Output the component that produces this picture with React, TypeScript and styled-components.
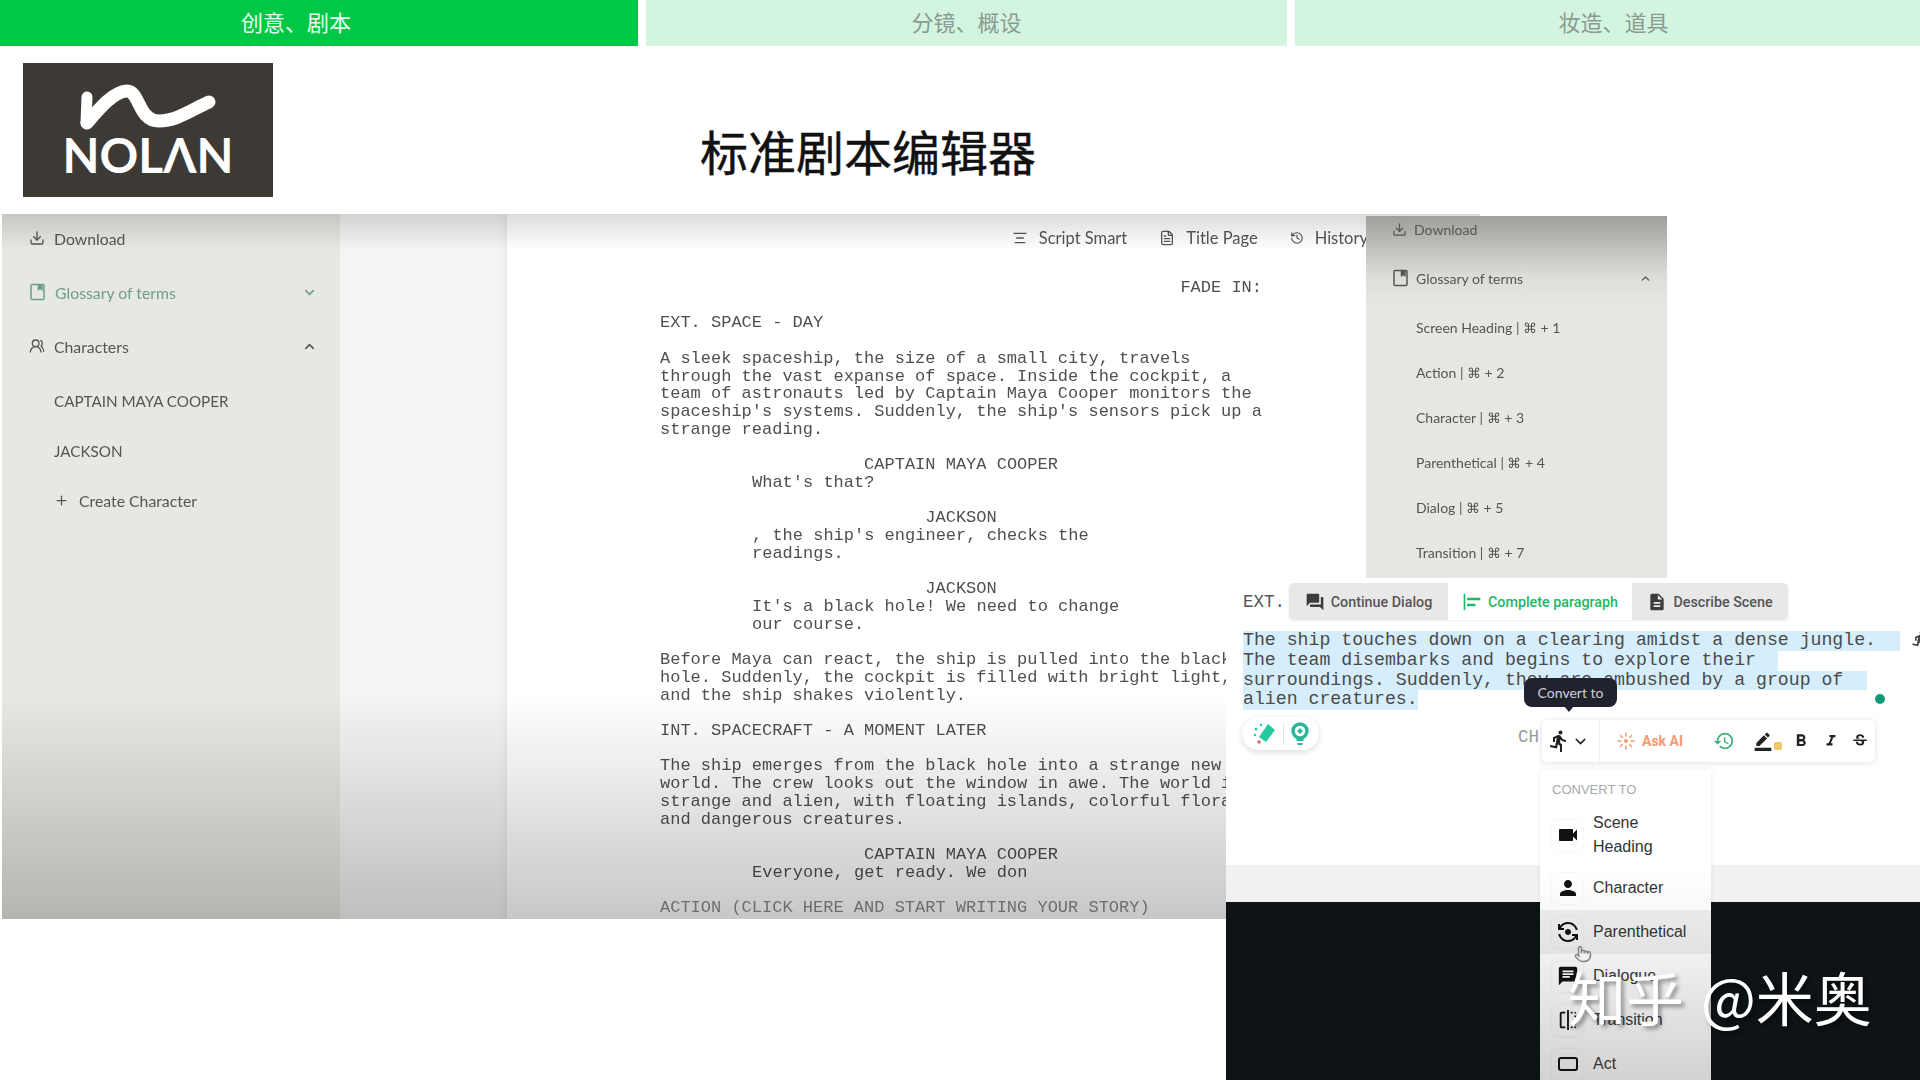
import styled, { createGlobalStyle } from "styled-components";
import { ChevronDown, ChevronUp, Download, History, Plus, UsersRound, AlignCenter, FileText, Pointer } from "lucide-react";
import {
  MdAlignHorizontalLeft,
  MdChat,
  MdDescription,
  MdDirectionsRun,
  MdFlip,
  MdFlipCameraAndroid,
  MdFormatBold,
  MdFormatItalic,
  MdHistory,
  MdPerson,
  MdQuestionAnswer,
  MdBorderColor,
  MdStrikethroughS,
  MdVideocam,
} from "react-icons/md";

const GlobalStyle = createGlobalStyle`
  html, body { margin: 0; padding: 0; background: #fff; }
  * { box-sizing: border-box; }
`;

const Page = styled.div`
  width: 1920px;
  height: 1080px;
  overflow: hidden;
  background: #fff;
  font-family: "Noto Sans CJK SC", "Noto Sans", sans-serif;
`;

// top step bar
const TabBar = styled.div`
  display: grid;
  grid-template-columns: 638px 641px 1fr;
  column-gap: 8px;
  height: 46px;
`;
const StepTab = styled.div<{ $active?: boolean; $shift?: number }>`
  display: flex;
  align-items: center;
  justify-content: center;
  padding-bottom: 5px;
  padding-left: ${(p) => (p.$shift && p.$shift > 0 ? p.$shift : 0)}px;
  padding-right: ${(p) => (p.$shift && p.$shift < 0 ? -p.$shift : 0)}px;
  font-size: 22px;
  background: ${(p) => (p.$active ? "#00c846" : "#d3f5e0")};
  color: ${(p) => (p.$active ? "#e6fff0" : "#8b9a92")};
`;

const Header = styled.div`
  display: flex;
  align-items: flex-start;
  height: 168px;
  padding: 17px 0 0 23px;
`;
const Logo = styled.div`
  position: relative;
  width: 250px;
  height: 134px;
  background: #3d3a36;
  display: flex;
  flex-direction: column;
  align-items: center;
  justify-content: flex-end;
  padding-bottom: 18px;
  svg { position: absolute; left: 0; top: 0; }
`;
const LogoWord = styled.span`
  font-family: Lato, sans-serif;
  font-weight: 700;
  font-size: 48px;
  line-height: 48px;
  color: #fff;
`;
const Title = styled.h1`
  margin: 57px 0 0 427px;
  font-size: 48px;
  line-height: 60px;
  font-weight: 400;
  color: #111;
  -webkit-text-stroke: 0.4px #111;
`;

const Stage = styled.div`
  position: relative;
  height: 866px;
`;

// the big editor screenshot
const Shot = styled.div`
  position: relative;
  display: flex;
  width: 1478px;
  height: 705px;
  margin-left: 2px;
  overflow: hidden;
  &::after {
    content: "";
    position: absolute;
    inset: 0;
    pointer-events: none;
    background:
      linear-gradient(to bottom, rgba(0, 0, 0, 0.14), rgba(0, 0, 0, 0) 36px),
      linear-gradient(to bottom, rgba(0, 0, 0, 0) 68%, rgba(0, 0, 0, 0.22) 100%);
  }
`;
const Sidebar = styled.div`
  width: 338px;
  flex: none;
  background: #e7e7e3;
  padding: 9px 23px 0 27px;
  display: flex;
  flex-direction: column;
  gap: 24px;
  font-family: Lato, sans-serif;
  font-size: 15.8px;
  color: #555;
  filter: blur(0.3px);
`;
const Gutter = styled.div`
  width: 167px;
  flex: none;
  background: #f4f4f2;
  box-shadow: inset -8px 0 8px -6px rgba(0, 0, 0, 0.06);
`;
const Paper = styled.div`
  flex: 1;
  background: #fff;
  filter: blur(0.25px);
`;
const NavRow = styled.div<{ $accent?: boolean }>`
  display: flex;
  align-items: center;
  height: 30px;
  gap: 9px;
  color: ${(p) => (p.$accent ? "#6f9d8f" : "inherit")};
  svg { flex: none; }
`;
const NavLabel = styled.span`
  flex: 1;
`;
const SubList = styled.div`
  display: flex;
  flex-direction: column;
  gap: 19.5px;
  margin-top: 1px;
  padding-left: 25px;
`;
const SubRow = styled.div<{ $caps?: boolean }>`
  display: flex;
  align-items: center;
  height: 30px;
  gap: 10px;
  font-size: ${(p) => (p.$caps ? "15.2px" : "inherit")};
`;

const PaperBar = styled.div`
  display: flex;
  justify-content: flex-end;
  align-items: center;
  height: 48px;
  padding-right: 112px;
  gap: 32px;
  font-family: Lato, sans-serif;
  font-size: 16.5px;
  color: #555;
`;
const BarItem = styled.div`
  display: flex;
  align-items: center;
  gap: 11px;
`;

const Script = styled.div`
  width: 602px;
  margin: 17px 0 0 153px;
  font-family: "Liberation Mono", monospace;
  font-size: 17px;
  line-height: 17.72px;
  color: #4f4f4f;
`;
const ScriptLine = styled.div<{ $kind?: "fade" | "character" | "dialogue" | "hint" }>`
  white-space: pre;
  text-align: ${(p) => (p.$kind === "fade" ? "right" : p.$kind === "character" ? "center" : "left")};
  margin-left: ${(p) => (p.$kind === "dialogue" ? "92px" : "0")};
  color: ${(p) => (p.$kind === "hint" ? "#8a8a8a" : "inherit")};
`;
const Blank = styled.div`
  height: 17.72px;
`;

// glossary panel stuck over the screenshot
const GlossaryPanel = styled.div`
  position: absolute;
  left: 1366px;
  top: 2px;
  width: 301px;
  height: 362px;
  padding: 0 15px 0 26px;
  display: flex;
  flex-direction: column;
  gap: 21px;
  background: linear-gradient(to bottom, #9f9f9c 0, #dcdcd8 60px, #e6e6e2 90px);
  font-family: Lato, sans-serif;
  font-size: 14px;
  color: #555;
  filter: blur(0.3px);
`;
const GlossaryHead = styled.div`
  display: flex;
  flex-direction: column;
  gap: 21px;
  margin-top: -1px;
  margin-bottom: 1px;
`;
const GlossaryRow = styled.div`
  display: flex;
  align-items: center;
  gap: 7px;
  height: 28px;
`;
const GlossaryList = styled.div`
  display: flex;
  flex-direction: column;
  gap: 17px;
  padding-left: 24px;
`;
const GlossaryItem = styled.div`
  height: 28px;
  line-height: 28px;
`;

// AI editor crop, bottom right
const EditorPanel = styled.div`
  position: absolute;
  left: 1226px;
  top: 364px;
  right: 0;
  bottom: 0;
  display: flex;
  flex-direction: column;
  overflow: hidden;
  background: #fff;
`;
const EditorArea = styled.div`
  height: 287px;
  padding: 5px 0 0 17px;
  flex: none;
`;
const GreyBand = styled.div`
  height: 37px;
  flex: none;
  background: #f1f1f1;
`;
const DarkArea = styled.div`
  flex: 1;
  background: #0e1316;
`;
const PromptRow = styled.div`
  display: flex;
  align-items: center;
  height: 37px;
`;
const Mono = styled.span`
  font-family: "Liberation Mono", monospace;
  font-size: 17.5px;
  color: #555;
`;
const PromptTabs = styled.div`
  display: flex;
  height: 37px;
  margin-left: 4px;
  background: #e8e8e8;
  border-radius: 5px;
  box-shadow: 0 1px 3px rgba(0, 0, 0, 0.08);
`;
const PromptTab = styled.div<{ $active?: boolean; $w: number }>`
  display: flex;
  align-items: center;
  justify-content: center;
  gap: 6px;
  width: ${(p) => p.$w}px;
  background: ${(p) => (p.$active ? "#fff" : "transparent")};
  color: ${(p) => (p.$active ? "#1fb864" : "#555")};
  font-family: Roboto, sans-serif;
  font-weight: 500;
  font-size: 14.3px;
  svg { color: ${(p) => (p.$active ? "#1fb864" : "#3c3c3c")}; }
`;
const Selection = styled.div`
  margin-top: 11px;
  font-family: "Liberation Mono", monospace;
  font-size: 18.2px;
  line-height: 19.75px;
  color: #4a4a4a;
`;
const SelectedLine = styled.div<{ $w: number }>`
  width: ${(p) => p.$w}px;
  background: #d6eefc;
  white-space: pre;
`;
const ToolPill = styled.div`
  display: flex;
  align-items: center;
  justify-content: center;
  gap: 5px;
  width: 77px;
  height: 33px;
  margin: 7px 0 0 -1px;
  border-radius: 17px;
  background: #fff;
  box-shadow: 0 2px 6px rgba(0, 0, 0, 0.14);
`;
const PillRule = styled.span`
  width: 1px;
  height: 22px;
  background: #e4e4e4;
`;
const ClippedCh = styled.span`
  position: absolute;
  left: 292px;
  top: 149px;
  font-family: "Liberation Mono", monospace;
  font-size: 17.5px;
  color: #9a9a9a;
`;
const GreenDot = styled.span`
  position: absolute;
  left: 649px;
  top: 116px;
  width: 10px;
  height: 10px;
  border-radius: 50%;
  background: #0f9a78;
`;
const EdgeRunner = styled.span`
  position: absolute;
  left: 684px;
  top: 52px;
  color: #444;
`;
const Tooltip = styled.div`
  position: absolute;
  left: 298px;
  top: 100px;
  width: 93px;
  height: 29px;
  display: flex;
  align-items: center;
  justify-content: center;
  border-radius: 8px;
  background: #20222e;
  color: #cfd0d4;
  font-family: Lato, sans-serif;
  font-size: 14px;
  &::after {
    content: "";
    position: absolute;
    left: 40px;
    bottom: -5px;
    border-left: 5px solid transparent;
    border-right: 5px solid transparent;
    border-top: 6px solid #20222e;
  }
`;
const FloatBar = styled.div`
  position: absolute;
  left: 316px;
  top: 142px;
  width: 333px;
  height: 42px;
  display: flex;
  align-items: center;
  background: #fff;
  border-radius: 5px;
  box-shadow: 0 1px 6px rgba(0, 0, 0, 0.13);
  color: #222;
`;
const BarLeft = styled.div`
  display: flex;
  align-items: center;
  width: 58px;
  height: 100%;
  padding-left: 5px;
  gap: 1px;
  border-right: 1px solid #eee;
`;
const BarRight = styled.div`
  display: flex;
  align-items: center;
  padding-left: 17px;
`;
const AskAi = styled.span`
  margin-left: 7px;
  font-family: Roboto, sans-serif;
  font-weight: 700;
  font-size: 14px;
  color: #f29a74;
`;
const BarIcon = styled.span<{ $gap: number; $color?: string }>`
  display: flex;
  margin-left: ${(p) => p.$gap}px;
  color: ${(p) => p.$color || "#222"};
`;
const Swatch = styled.span`
  width: 8px;
  height: 8px;
  margin: 10px 0 0 1px;
  border-radius: 2px;
  background: #f0c766;
`;
const ConvertMenu = styled.div`
  position: absolute;
  left: 314px;
  top: 192px;
  bottom: 0;
  width: 171px;
  padding-top: 12px;
  background: linear-gradient(to bottom, #fff 0, #fff 100px, #f4f4f4 170px, #d2d2d2 100%);
  box-shadow: 0 0 5px rgba(0, 0, 0, 0.08);
  font-family: "Liberation Sans", sans-serif;
  font-size: 16px;
  line-height: 24.5px;
  color: #333;
`;
const MenuHeading = styled.div`
  padding-left: 12px;
  margin-bottom: 6px;
  font-size: 13px;
  line-height: 16px;
  color: #aaa;
`;
const MenuRow = styled.div<{ $tall?: boolean; $hover?: boolean }>`
  display: flex;
  align-items: center;
  gap: 10px;
  height: ${(p) => (p.$tall ? "62px" : "44px")};
  padding-left: 12px;
  background: ${(p) => (p.$hover ? "rgba(0,0,0,0.06)" : "transparent")};
`;
const MenuIcon = styled.span`
  display: flex;
  align-items: center;
  justify-content: center;
  flex: none;
  width: 31px;
  height: 31px;
  border-radius: 5px;
  color: #111;
  box-shadow: 0 0 3px rgba(0, 0, 0, 0.08);
`;
const MenuLabel = styled.span`
  flex: 1;
`;
const HandCursor = styled.span`
  position: absolute;
  left: 348px;
  top: 366px;
  color: #888;
`;
const Watermark = styled.div`
  position: absolute;
  left: 342px;
  top: 376px;
  font-size: 58px;
  line-height: 84px;
  word-spacing: 4px;
  white-space: pre;
  color: #fff;
  text-shadow: 3px 3px 4px rgba(0, 0, 0, 0.4);
`;

const BookIcon = () => (
  <svg width="17" height="18" viewBox="0 0 17 18" fill="none" stroke="currentColor" strokeWidth="1.5">
    <rect x="2" y="1.5" width="13" height="15" rx="1" />
    <path d="M9.5 1.5v5l1.7-1.2 1.7 1.2v-5" fill="currentColor" />
  </svg>
);

const SunBurst = () => (
  <svg width="18" height="18" viewBox="0 0 18 18" stroke="#f29a74" strokeWidth="1.4" strokeLinecap="round">
    <circle cx="9" cy="9" r="2" fill="#f29a74" stroke="none" />
    <path d="M9 1v3M9 14v3M1 9h3M14 9h3M3.4 3.4l2 2M12.6 12.6l2 2M3.4 14.6l2-2M12.6 5.4l2-2" />
  </svg>
);

const MagicPen = () => (
  <svg width="28" height="28" viewBox="0 0 28 28">
    <path d="M18 4l7 6-9 12-7-5z" fill="#27c9a0" />
    <circle cx="6" cy="9" r="1.5" fill="#27c9a0" />
    <circle cx="11" cy="5" r="1.2" fill="#27c9a0" />
    <circle cx="5" cy="15" r="1.2" fill="#27c9a0" />
    <circle cx="9" cy="22" r="1.8" fill="#d9705f" />
  </svg>
);

const Bulb = () => (
  <svg width="22" height="26" viewBox="0 0 22 26">
    <circle cx="11" cy="10" r="7" fill="none" stroke="#27b99a" strokeWidth="3.4" />
    <path d="M7.5 17h7v3h-7z" fill="#27b99a" />
    <path d="M8.5 22h5v2h-5z" fill="#27b99a" />
    <path d="M11 7l3 3-3 3-3-3z" fill="#27b99a" />
  </svg>
);

const ActIcon = () => (
  <svg width="20" height="14" viewBox="0 0 20 14" fill="none" stroke="currentColor" strokeWidth="2">
    <rect x="1" y="1" width="18" height="12" rx="2" />
  </svg>
);

const Swoosh = () => (
  <svg width="250" height="134" viewBox="0 0 250 134" fill="none" stroke="#fff" strokeLinecap="round" strokeLinejoin="round">
    <path d="M64 34L63 60" strokeWidth="11" />
    <path d="M64 60C76 46 91 28 104 28C117 28 115 58 136 58C154 58 170 46 186 39" strokeWidth="13" />
  </svg>
);

const glossary = [
  "Screen Heading | ⌘ + 1",
  "Action | ⌘ + 2",
  "Character | ⌘ + 3",
  "Parenthetical | ⌘ + 4",
  "Dialog | ⌘ + 5",
  "Transition | ⌘ + 7",
];

type Line = { text?: string; kind?: "fade" | "character" | "dialogue" | "hint" };

const script: Line[] = [
  { text: "FADE IN:", kind: "fade" },
  {},
  { text: "EXT. SPACE - DAY" },
  {},
  { text: "A sleek spaceship, the size of a small city, travels" },
  { text: "through the vast expanse of space. Inside the cockpit, a" },
  { text: "team of astronauts led by Captain Maya Cooper monitors the" },
  { text: "spaceship's systems. Suddenly, the ship's sensors pick up a" },
  { text: "strange reading." },
  {},
  { text: "CAPTAIN MAYA COOPER", kind: "character" },
  { text: "What's that?", kind: "dialogue" },
  {},
  { text: "JACKSON", kind: "character" },
  { text: ", the ship's engineer, checks the", kind: "dialogue" },
  { text: "readings.", kind: "dialogue" },
  {},
  { text: "JACKSON", kind: "character" },
  { text: "It's a black hole! We need to change", kind: "dialogue" },
  { text: "our course.", kind: "dialogue" },
  {},
  { text: "Before Maya can react, the ship is pulled into the black" },
  { text: "hole. Suddenly, the cockpit is filled with bright light," },
  { text: "and the ship shakes violently." },
  {},
  { text: "INT. SPACECRAFT - A MOMENT LATER" },
  {},
  { text: "The ship emerges from the black hole into a strange new" },
  { text: "world. The crew looks out the window in awe. The world is" },
  { text: "strange and alien, with floating islands, colorful flora," },
  { text: "and dangerous creatures." },
  {},
  { text: "CAPTAIN MAYA COOPER", kind: "character" },
  { text: "Everyone, get ready. We don", kind: "dialogue" },
  {},
  { text: "ACTION (CLICK HERE AND START WRITING YOUR STORY)", kind: "hint" },
];

const selected = [
  { text: "The ship touches down on a clearing amidst a dense jungle.", w: 657 },
  { text: "The team disembarks and begins to explore their", w: 535 },
  { text: "surroundings. Suddenly, they are ambushed by a group of", w: 624 },
  { text: "alien creatures.", w: 175 },
];

export default function App() {
  return (
    <Page>
      <GlobalStyle />
      <TabBar>
        <StepTab $active $shift={-46}>创意、剧本</StepTab>
        <StepTab>分镜、概设</StepTab>
        <StepTab $shift={12}>妆造、道具</StepTab>
      </TabBar>

      <Header>
        <Logo>
          <Swoosh />
          <LogoWord>NOLΛN</LogoWord>
        </Logo>
        <Title>标准剧本编辑器</Title>
      </Header>

      <Stage>
        <Shot>
          <Sidebar>
            <NavRow>
              <Download size={16} />
              <NavLabel>Download</NavLabel>
            </NavRow>
            <NavRow $accent>
              <BookIcon />
              <NavLabel>Glossary of terms</NavLabel>
              <ChevronDown size={15} strokeWidth={2.5} />
            </NavRow>
            <NavRow>
              <UsersRound size={16} />
              <NavLabel>Characters</NavLabel>
              <ChevronUp size={15} strokeWidth={2.5} />
            </NavRow>
            <SubList>
              <SubRow $caps>CAPTAIN MAYA COOPER</SubRow>
              <SubRow $caps>JACKSON</SubRow>
              <SubRow>
                <Plus size={15} />
                Create Character
              </SubRow>
            </SubList>
          </Sidebar>
          <Gutter />
          <Paper>
            <PaperBar>
              <BarItem>
                <AlignCenter size={16} />
                Script Smart
              </BarItem>
              <BarItem>
                <FileText size={16} />
                Title Page
              </BarItem>
              <BarItem>
                <History size={14} />
                History
              </BarItem>
            </PaperBar>
            <Script>
              {script.map((line, i) =>
                line.text ? (
                  <ScriptLine key={i} $kind={line.kind}>
                    {line.text}
                  </ScriptLine>
                ) : (
                  <Blank key={i} />
                )
              )}
            </Script>
          </Paper>
        </Shot>

        <GlossaryPanel>
          <GlossaryHead>
            <GlossaryRow>
              <Download size={15} />
              Download
            </GlossaryRow>
            <GlossaryRow>
              <BookIcon />
              <NavLabel>Glossary of terms</NavLabel>
              <ChevronUp size={13} strokeWidth={2.5} />
            </GlossaryRow>
          </GlossaryHead>
          <GlossaryList>
            {glossary.map((g) => (
              <GlossaryItem key={g}>{g}</GlossaryItem>
            ))}
          </GlossaryList>
        </GlossaryPanel>

        <EditorPanel>
          <EditorArea>
            <PromptRow>
              <Mono>EXT.</Mono>
              <PromptTabs>
                <PromptTab $w={159}>
                  <MdQuestionAnswer size={20} />
                  Continue Dialog
                </PromptTab>
                <PromptTab $w={184} $active>
                  <MdAlignHorizontalLeft size={20} />
                  Complete paragraph
                </PromptTab>
                <PromptTab $w={156}>
                  <MdDescription size={20} />
                  Describe Scene
                </PromptTab>
              </PromptTabs>
            </PromptRow>
            <Selection>
              {selected.map((s) => (
                <SelectedLine key={s.text} $w={s.w}>
                  {s.text}
                </SelectedLine>
              ))}
            </Selection>
            <ToolPill>
              <MagicPen />
              <PillRule />
              <Bulb />
            </ToolPill>
          </EditorArea>
          <GreyBand />
          <DarkArea />

          <EdgeRunner>
            <MdDirectionsRun size={20} />
          </EdgeRunner>
          <GreenDot />
          <ClippedCh>CH</ClippedCh>
          <Tooltip>Convert to</Tooltip>
          <FloatBar>
            <BarLeft>
              <MdDirectionsRun size={24} />
              <ChevronDown size={17} />
            </BarLeft>
            <BarRight>
              <SunBurst />
              <AskAi>Ask AI</AskAi>
              <BarIcon $gap={30} $color="#3fae7c">
                <MdHistory size={22} />
              </BarIcon>
              <BarIcon $gap={18}>
                <MdBorderColor size={20} />
              </BarIcon>
              <Swatch />
              <BarIcon $gap={9}>
                <MdFormatBold size={20} />
              </BarIcon>
              <BarIcon $gap={11}>
                <MdFormatItalic size={18} />
              </BarIcon>
              <BarIcon $gap={11}>
                <MdStrikethroughS size={18} />
              </BarIcon>
            </BarRight>
          </FloatBar>
          <ConvertMenu>
            <MenuHeading>CONVERT TO</MenuHeading>
            <MenuRow $tall>
              <MenuIcon>
                <MdVideocam size={24} />
              </MenuIcon>
              <MenuLabel>
                Scene
                <br />
                Heading
              </MenuLabel>
            </MenuRow>
            <MenuRow>
              <MenuIcon>
                <MdPerson size={24} />
              </MenuIcon>
              <MenuLabel>Character</MenuLabel>
            </MenuRow>
            <MenuRow $hover>
              <MenuIcon>
                <MdFlipCameraAndroid size={24} />
              </MenuIcon>
              <MenuLabel>Parenthetical</MenuLabel>
            </MenuRow>
            <MenuRow>
              <MenuIcon>
                <MdChat size={22} />
              </MenuIcon>
              <MenuLabel>Dialogue</MenuLabel>
            </MenuRow>
            <MenuRow>
              <MenuIcon>
                <MdFlip size={22} />
              </MenuIcon>
              <MenuLabel>Transition</MenuLabel>
            </MenuRow>
            <MenuRow>
              <MenuIcon>
                <ActIcon />
              </MenuIcon>
              <MenuLabel>Act</MenuLabel>
            </MenuRow>
          </ConvertMenu>
          <HandCursor>
            <Pointer size={18} />
          </HandCursor>
          <Watermark>知乎 @米奥</Watermark>
        </EditorPanel>
      </Stage>
    </Page>
  );
}
